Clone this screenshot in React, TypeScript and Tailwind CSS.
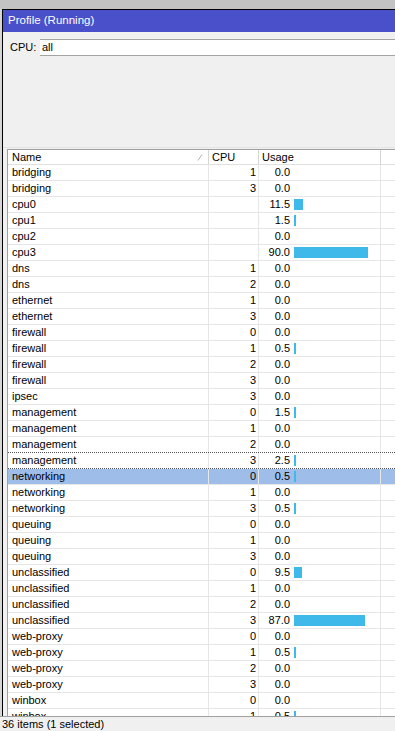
type Row = {
  name: string;
  cpu: string;
  usage: number;
};

const rows: Row[] = [
  { name: "bridging", cpu: "1", usage: 0 },
  { name: "bridging", cpu: "3", usage: 0 },
  { name: "cpu0", cpu: "", usage: 11.5 },
  { name: "cpu1", cpu: "", usage: 1.5 },
  { name: "cpu2", cpu: "", usage: 0 },
  { name: "cpu3", cpu: "", usage: 90 },
  { name: "dns", cpu: "1", usage: 0 },
  { name: "dns", cpu: "2", usage: 0 },
  { name: "ethernet", cpu: "1", usage: 0 },
  { name: "ethernet", cpu: "3", usage: 0 },
  { name: "firewall", cpu: "0", usage: 0 },
  { name: "firewall", cpu: "1", usage: 0.5 },
  { name: "firewall", cpu: "2", usage: 0 },
  { name: "firewall", cpu: "3", usage: 0 },
  { name: "ipsec", cpu: "3", usage: 0 },
  { name: "management", cpu: "0", usage: 1.5 },
  { name: "management", cpu: "1", usage: 0 },
  { name: "management", cpu: "2", usage: 0 },
  { name: "management", cpu: "3", usage: 2.5 },
  { name: "networking", cpu: "0", usage: 0.5 },
  { name: "networking", cpu: "1", usage: 0 },
  { name: "networking", cpu: "3", usage: 0.5 },
  { name: "queuing", cpu: "0", usage: 0 },
  { name: "queuing", cpu: "1", usage: 0 },
  { name: "queuing", cpu: "3", usage: 0 },
  { name: "unclassified", cpu: "0", usage: 9.5 },
  { name: "unclassified", cpu: "1", usage: 0 },
  { name: "unclassified", cpu: "2", usage: 0 },
  { name: "unclassified", cpu: "3", usage: 87 },
  { name: "web-proxy", cpu: "0", usage: 0 },
  { name: "web-proxy", cpu: "1", usage: 0.5 },
  { name: "web-proxy", cpu: "2", usage: 0 },
  { name: "web-proxy", cpu: "3", usage: 0 },
  { name: "winbox", cpu: "0", usage: 0 },
  { name: "winbox", cpu: "1", usage: 0.5 },
];

const SELECTED = 19;
const FOCUSED = 18;

function UsageBar({ value }: { value: number }) {
  if (value <= 0) return null;
  const w = Math.max(2, Math.round(value * 0.82));
  return <div className="ml-[4px] h-[11px] bg-[#3fb9ea]" style={{ width: w }} />;
}

function TableRow({ row, index }: { row: Row; index: number }) {
  const selected = index === SELECTED;
  const focused = index === FOCUSED;
  return (
    <div
      className={`flex h-[16px] shrink-0 items-center border-b ${
        focused ? "border-dotted border-b-[#555] border-t border-t-[#555] h-[17px] -mt-px" : "border-[#e6e6e6]"
      } ${selected ? "bg-[#9fbde9]" : "bg-white"}`}
    >
      <div className="flex h-full w-[201px] shrink-0 items-center border-r border-[#e6e6e6] pl-[4px]">
        {row.name}
      </div>
      <div className="flex h-full w-[50px] shrink-0 items-center justify-end border-r border-[#e6e6e6] pr-[2px]">
        {row.cpu}
      </div>
      <div className="flex h-full w-[122px] shrink-0 items-center border-r border-[#e6e6e6]">
        <span className="w-[31px] text-right">{row.usage.toFixed(1)}</span>
        <UsageBar value={row.usage} />
      </div>
      <div className="h-full flex-1" />
    </div>
  );
}

export default function App() {
  return (
    <div
      className="flex h-[731px] w-[395px] flex-col overflow-hidden bg-[#f0f0f0] text-[11px] text-black"
      style={{ fontFamily: '"Liberation Sans", Arial, sans-serif' }}
    >
      <div className="h-[9px] shrink-0 bg-[#c3c3c3]" />
      <div className="flex min-h-0 flex-1">
        <div className="w-[3px] shrink-0 border-r border-black bg-[#d6d6d6]" />
        <div className="flex min-w-0 flex-1 flex-col border-t border-black">
          <div className="flex h-[22px] shrink-0 items-center bg-[#4a50c9] pl-[5px] text-[11.5px] text-white">
            Profile (Running)
          </div>
          <div className="mt-[7px] flex h-[17px] shrink-0 items-center">
            <span className="w-[37px] pl-[7px]">CPU:</span>
            <div className="flex h-full flex-1 items-center border-y border-[#a3a3a3] bg-white pl-[2px]">
              all
            </div>
          </div>
          <div className="mt-[91px] h-px shrink-0 bg-[#e4e4e4]" />
          <div className="ml-[4px] mt-px flex min-h-0 flex-1 flex-col overflow-hidden border-l border-t border-[#a0a0a0] bg-white">
            <div className="flex h-[15px] shrink-0 items-center border-b border-[#e0e0e0]">
              <div className="relative flex h-full w-[201px] shrink-0 items-center border-r border-[#d5d5d5] pl-[4px]">
                Name
                <svg className="absolute right-[5px] top-[4px]" width="6" height="7" viewBox="0 0 6 7">
                  <path d="M1 6.5 L5 0.5" stroke="#b0b0b0" strokeWidth="1" />
                </svg>
              </div>
              <div className="flex h-full w-[50px] shrink-0 items-center border-r border-[#d5d5d5] pl-[3px]">
                CPU
              </div>
              <div className="flex h-full w-[122px] shrink-0 items-center border-r border-[#d5d5d5] pl-[3px]">
                Usage
              </div>
              <div className="h-full flex-1" />
            </div>
            {rows.map((r, i) => (
              <TableRow key={i} row={r} index={i} />
            ))}
          </div>
        </div>
      </div>
      <div className="flex h-[15px] shrink-0 items-center border-t border-[#a0a0a0] bg-[#f0f0f0] pl-[2px]">
        36 items (1 selected)
      </div>
    </div>
  );
}
